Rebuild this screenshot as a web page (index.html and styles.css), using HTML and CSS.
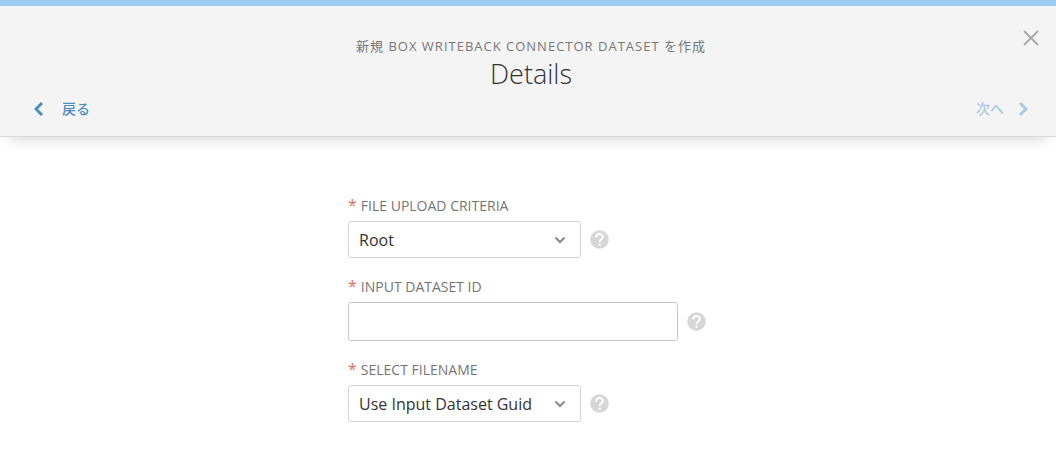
FILE: index.html
```html
<!DOCTYPE html>
<html lang="ja">

<head>
  <meta charset="utf-8">
  <title>Details</title>
  <link rel="stylesheet" href="styles.css">
</head>

<body>
  <header class="header">
    <div class="title-row">
      <div class="title">
        <p class="subtitle">新規 BOX WRITEBACK CONNECTOR DATASET を作成</p>
        <h1>Details</h1>
      </div>
      <button type="button" class="close" aria-label="閉じる">
        <svg width="18" height="18" viewBox="0 0 18 18">
          <path d="M2 2 L16 16 M16 2 L2 16" />
        </svg>
      </button>
    </div>
    <nav class="steps">
      <button type="button" class="step">
        <svg width="10" height="14" viewBox="0 0 10 14">
          <path d="M8 1 L2 7 L8 13" />
        </svg>
        戻る
      </button>
      <button type="button" class="step" disabled>
        次へ
        <svg width="10" height="14" viewBox="0 0 10 14">
          <path d="M2 1 L8 7 L2 13" />
        </svg>
      </button>
    </nav>
  </header>

  <form class="form">
    <div class="field">
      <label for="criteria"><span class="required">*</span>FILE UPLOAD CRITERIA</label>
      <div class="control">
        <div class="select-box">
          <select id="criteria">
            <option>Root</option>
          </select>
          <svg class="arrow" width="12" height="8" viewBox="0 0 12 8">
            <path d="M1.5 1.5 L6 6 L10.5 1.5" />
          </svg>
        </div>
        <button type="button" class="help" aria-label="ヘルプ">
          <svg width="19" height="19" viewBox="0 0 19 19">
            <circle cx="9.5" cy="9.5" r="9.3" />
            <path d="M6.2 7.4 C6.2 3 12.8 3.1 12.8 7 C12.8 9.4 9.6 9.2 9.6 12 M9.6 13.5 V15.7" />
          </svg>
        </button>
      </div>
    </div>

    <div class="field">
      <label for="dataset"><span class="required">*</span>INPUT DATASET ID</label>
      <div class="control">
        <input type="text" id="dataset">
        <button type="button" class="help" aria-label="ヘルプ">
          <svg width="19" height="19" viewBox="0 0 19 19">
            <circle cx="9.5" cy="9.5" r="9.3" />
            <path d="M6.2 7.4 C6.2 3 12.8 3.1 12.8 7 C12.8 9.4 9.6 9.2 9.6 12 M9.6 13.5 V15.7" />
          </svg>
        </button>
      </div>
    </div>

    <div class="field">
      <label for="filename"><span class="required">*</span>SELECT FILENAME</label>
      <div class="control">
        <div class="select-box">
          <select id="filename">
            <option>Use Input Dataset Guid</option>
          </select>
          <svg class="arrow" width="12" height="8" viewBox="0 0 12 8">
            <path d="M1.5 1.5 L6 6 L10.5 1.5" />
          </svg>
        </div>
        <button type="button" class="help" aria-label="ヘルプ">
          <svg width="19" height="19" viewBox="0 0 19 19">
            <circle cx="9.5" cy="9.5" r="9.3" />
            <path d="M6.2 7.4 C6.2 3 12.8 3.1 12.8 7 C12.8 9.4 9.6 9.2 9.6 12 M9.6 13.5 V15.7" />
          </svg>
        </button>
      </div>
    </div>
  </form>
</body>

</html>
```
FILE: styles.css
```css
* {
  box-sizing: border-box;
}

body {
  margin: 0;
  background: #fff;
  color: #333;
  font-family: "Open Sans", "Noto Sans CJK JP", sans-serif;
}

button,
input,
select {
  font-family: inherit;
}

button {
  padding: 0;
  border: 0;
  background: none;
}

svg {
  display: block;
  fill: none;
}

.header {
  padding: 23px 16px 11px 22px;
  border-top: 6px solid #99ccf0;
  border-bottom: 1px solid #d8d8d8;
  background: #f4f4f4;
  box-shadow: 0 10px 16px -10px rgba(0, 0, 0, 0.22);
}

.title-row {
  display: grid;
  grid-template-columns: 1fr auto 1fr;
}

.title {
  grid-column: 2;
  padding-top: 7px;
  text-align: center;
}

.subtitle {
  margin: 0;
  color: #777;
  font-size: 13px;
  line-height: 20px;
  letter-spacing: 1px;
}

h1 {
  margin: 0;
  font-size: 27px;
  font-weight: 300;
  line-height: 36px;
}

.close {
  justify-self: end;
  align-self: start;
  stroke: #aaa;
  stroke-width: 2;
}

.steps {
  display: flex;
  justify-content: space-between;
  padding: 7px 12px 6px;
}

.step {
  display: flex;
  align-items: center;
  gap: 18px;
  color: #4b8fbf;
  font-size: 14px;
  font-weight: 500;
  line-height: 20px;
  stroke: currentColor;
  stroke-width: 0;
}

.step svg {
  stroke-width: 3;
}

.step:disabled {
  gap: 14px;
  color: #a9c9e0;
}

.form {
  display: flex;
  flex-direction: column;
  gap: 19px;
  max-width: 360px;
  margin: 0 auto;
  padding: 59px 0 30px;
}

label {
  display: block;
  margin-bottom: 5px;
  color: #757575;
  font-size: 14px;
  font-weight: 500;
  line-height: 20px;
}

.required {
  margin-right: 4px;
  color: #f0695f;
  font-size: 16px;
  font-weight: 400;
  line-height: 16px;
}

.control {
  display: flex;
  align-items: center;
  gap: 9px;
}

.select-box {
  display: grid;
  align-items: center;
  width: 233px;
}

.select-box select,
.select-box .arrow {
  grid-area: 1 / 1;
}

select,
input {
  border: 1px solid #d4d4d4;
  border-radius: 3px;
  background: #fff;
  color: #333;
  font-size: 16px;
}

select {
  height: 37px;
  padding: 0 32px 0 10px;
  appearance: none;
}

input {
  width: 330px;
  height: 39px;
  padding: 0 10px;
  border-color: #c8c8c8;
}

.arrow {
  justify-self: end;
  margin-right: 15px;
  stroke: #888;
  stroke-width: 2;
  pointer-events: none;
}

.help circle {
  fill: #d6d6d6;
}

.help path {
  stroke: #fff;
  stroke-width: 2;
}
```
